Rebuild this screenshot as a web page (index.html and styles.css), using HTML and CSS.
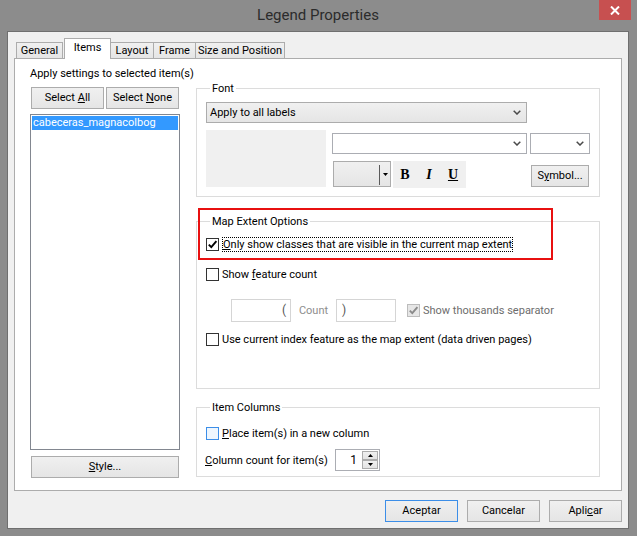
FILE: index.html
```html
<!DOCTYPE html>
<html>
<head>
<meta charset="utf-8">
<title>Legend Properties</title>
<link rel="stylesheet" href="styles.css">
</head>
<body>
<div class="window">
  <div class="titlebar">
    <div class="title">Legend Properties</div>
    <div class="close">
      <svg width="10" height="9" viewBox="0 0 10 9"><path d="M1 0.5 L9 8.5 M9 0.5 L1 8.5" stroke="#fff" stroke-width="2" fill="none"/></svg>
    </div>
  </div>
  <div class="client">
    <div class="tabs">
      <div class="tab t-general">General</div>
      <div class="tab t-items active">Items</div>
      <div class="tab t-layout">Layout</div>
      <div class="tab t-frame">Frame</div>
      <div class="tab t-size">Size and Position</div>
    </div>
    <div class="panel">
      <div class="left-col">
        <div class="caption">Apply settings to selected item(s)</div>
        <div class="select-row">
          <div class="btn btn-sel"><span>Select <u>A</u>ll</span></div>
          <div class="btn btn-sel"><span>Select <u>N</u>one</span></div>
        </div>
        <div class="listbox">
          <div class="list-item selected">cabeceras_magnacolbog</div>
        </div>
        <div class="btn btn-style"><span><u>S</u>tyle...</span></div>
      </div>
      <div class="right-col">
        <div class="group group-font">
          <div class="group-title">Font</div>
          <div class="combo combo-labels">
            <span>Apply to all labels</span>
            <svg class="chev" width="8" height="5" viewBox="0 0 8 5"><path d="M0.7 0.7 L4 4 L7.3 0.7" stroke="#4a4a4a" stroke-width="1.5" fill="none"/></svg>
          </div>
          <div class="font-row">
            <div class="preview"></div>
            <div class="font-controls">
              <div class="fc-row-a">
                <div class="combo white combo-font">
                  <span></span>
                  <svg class="chev" width="8" height="5" viewBox="0 0 8 5"><path d="M0.7 0.7 L4 4 L7.3 0.7" stroke="#4a4a4a" stroke-width="1.5" fill="none"/></svg>
                </div>
                <div class="combo white combo-size">
                  <span></span>
                  <svg class="chev" width="8" height="5" viewBox="0 0 8 5"><path d="M0.7 0.7 L4 4 L7.3 0.7" stroke="#4a4a4a" stroke-width="1.5" fill="none"/></svg>
                </div>
              </div>
              <div class="fc-row-b">
                <div class="colordd">
                  <div class="colordd-swatch"></div>
                  <div class="colordd-arrow">
                    <svg width="5" height="3" viewBox="0 0 5 3"><path d="M0 0 H5 L2.5 3 Z" fill="#000"/></svg>
                  </div>
                </div>
                <div class="biu">
                  <span class="b">B</span>
                  <span class="i">I</span>
                  <span class="u">U</span>
                </div>
                <div class="btn btn-symbol"><span>S<u>y</u>mbol...</span></div>
              </div>
            </div>
          </div>
        </div>

        <div class="group group-extent">
          <div class="highlight"></div>
          <div class="group-title">Map Extent Options</div>
          <div class="row row-only">
            <div class="cb">
              <svg width="11" height="11" viewBox="0 0 11 11"><path d="M1.8 5.6 L4.3 8.2 L9.4 2.2" stroke="#000" stroke-width="1.9" fill="none"/></svg>
            </div>
            <span class="cb-label focus"><u>O</u>nly show classes that are visible in the current map extent</span>
          </div>
          <div class="row row-count">
            <div class="cb"></div>
            <span class="cb-label">Show <u>f</u>eature count</span>
          </div>
          <div class="count-row">
            <div class="count-box left">(</div>
            <span class="count-label">Count</span>
            <div class="count-box right">)</div>
            <div class="cb disabled">
              <svg width="11" height="11" viewBox="0 0 11 11"><path d="M1.8 5.6 L4.3 8.2 L9.4 2.2" stroke="#8a8a8a" stroke-width="1.9" fill="none"/></svg>
            </div>
            <span class="cb-label gray">Show thousands separator</span>
          </div>
          <div class="row row-index">
            <div class="cb"></div>
            <span class="cb-label">Use current index feature as the map extent (data driven pages)</span>
          </div>
        </div>

        <div class="group group-columns">
          <div class="group-title">Item Columns</div>
          <div class="row row-place">
            <div class="cb hot"></div>
            <span class="cb-label"><u>P</u>lace item(s) in a new column</span>
          </div>
          <div class="spin-row">
            <span class="spin-label"><u>C</u>olumn count for item(s)</span>
            <div class="spin">
              <span class="spin-value">1</span>
              <div class="spin-buttons">
                <div class="spin-btn">
                  <svg width="5" height="3" viewBox="0 0 5 3"><path d="M0 3 H5 L2.5 0 Z" fill="#000"/></svg>
                </div>
                <div class="spin-btn">
                  <svg width="5" height="3" viewBox="0 0 5 3"><path d="M0 0 H5 L2.5 3 Z" fill="#000"/></svg>
                </div>
              </div>
            </div>
          </div>
        </div>
      </div>
    </div>
    <div class="footer">
      <div class="btn btn-footer default"><span>Aceptar</span></div>
      <div class="btn btn-footer"><span>Cancelar</span></div>
      <div class="btn btn-footer"><span>Apli<u>c</u>ar</span></div>
    </div>
  </div>
</div>
</body>
</html>
```

FILE: styles.css
```css
* { box-sizing: border-box; }

html, body {
  margin: 0;
  padding: 0;
}

body {
  width: 637px;
  height: 536px;
  overflow: hidden;
  background: #8c8c8c;
  font-family: Roboto, "Liberation Sans", sans-serif;
  font-size: 11px;
  color: #000;
  white-space: nowrap;
}

u { text-decoration: underline; text-underline-offset: 1px; }

.window {
  height: 536px;
  display: flex;
  flex-direction: column;
  padding: 0 8px 7px 7px;
}

/* title bar */
.titlebar {
  flex: none;
  height: 31px;
  position: relative;
  display: flex;
  align-items: center;
  justify-content: center;
}

.title {
  font-size: 15px;
  color: #2b2b2b;
  margin-top: -1px;
}

.close {
  position: absolute;
  top: 0;
  right: -2px;
  width: 32px;
  height: 20px;
  background: #c75050;
  display: flex;
  align-items: center;
  justify-content: center;
}

/* client area */
.client {
  flex: 1;
  display: flex;
  flex-direction: column;
  background: #f0f0f0;
  border: 1px solid #6f6f6f;
  padding: 6px 6px 6px 6px;
}

/* tabs */
.tabs {
  flex: none;
  height: 21px;
  margin-bottom: -1px;
  display: flex;
  align-items: flex-end;
  padding-left: 2px;
  position: relative;
  z-index: 1;
}

.tab {
  height: 17px;
  border: 1px solid #acacac;
  background: linear-gradient(#f0f0f0, #e5e5e5);
  display: flex;
  align-items: center;
  justify-content: center;
  margin-right: -1px;
  padding-bottom: 1px;
}

.tab.active {
  height: 21px;
  background: #fff;
  border-bottom: none;
  padding-bottom: 4px;
  position: relative;
  z-index: 2;
}

.t-general { width: 47px; margin-right: 1px; }
.t-items { width: 47px; }
.t-layout { width: 44px; }
.t-frame { width: 43px; }
.t-size { width: 90px; }

/* panel */
.panel {
  flex: 1;
  display: flex;
  background: #fff;
  border: 1px solid #acacac;
  padding: 0 21px 0 15px;
}

.left-col {
  flex: none;
  width: 150px;
  display: flex;
  flex-direction: column;
}

.caption {
  margin-top: 7px;
  height: 15px;
  line-height: 15px;
}

.select-row {
  margin-top: 6px;
  display: flex;
  gap: 2px;
  padding-left: 1px;
}

.btn {
  height: 22px;
  border: 1px solid #acacac;
  background: linear-gradient(#f0f0f0, #e5e5e5);
  display: flex;
  align-items: center;
  justify-content: center;
  padding-bottom: 1px;
}

.btn-sel { width: 73px; }

.listbox {
  margin-top: 5px;
  height: 336px;
  border: 1px solid #828790;
  padding: 1px;
}

.list-item {
  height: 14px;
  line-height: 14px;
  padding-left: 1px;
}

.list-item.selected {
  background: #3399ff;
  color: #fff;
}

.btn-style {
  margin-top: 6px;
  margin-left: 1px;
  width: 148px;
}

/* right column / groups */
.right-col {
  flex: none;
  width: 404px;
  margin-left: 16px;
  display: flex;
  flex-direction: column;
}

.group {
  position: relative;
  border: 1px solid #dcdcdc;
  padding: 0 8px 0 9px;
  display: flex;
  flex-direction: column;
  align-items: flex-start;
}

.group-title {
  margin: -8px 0 0 4px;
  padding: 0 2px;
  background: #fff;
  height: 15px;
  line-height: 15px;
  position: relative;
}

.group-font { margin-top: 29px; height: 109px; }
.group-extent { margin-top: 24px; height: 168px; }
.group-columns { margin-top: 18px; height: 70px; }

/* combos */
.combo {
  height: 21px;
  border: 1px solid #acacac;
  background: linear-gradient(#f0f0f0, #e5e5e5);
  display: flex;
  align-items: center;
  justify-content: space-between;
  padding: 0 5px 1px 3px;
}

.combo.white {
  background: #fff;
  border-color: #abadb3;
}

.chev { flex: none; margin-top: 1px; }

.combo-labels {
  margin-top: 6px;
  width: 321px;
}

.font-row {
  margin-top: 7px;
  display: flex;
}

.preview {
  width: 120px;
  height: 57px;
  background: #f0f0f0;
}

.font-controls {
  margin-left: 6px;
  width: 258px;
  display: flex;
  flex-direction: column;
}

.fc-row-a {
  margin-top: 3px;
  display: flex;
  gap: 3px;
}

.combo-font { width: 195px; }
.combo-size { width: 60px; }

.fc-row-b {
  margin-top: 7px;
  display: flex;
  align-items: flex-start;
}

.colordd {
  margin-left: 1px;
  width: 58px;
  height: 26px;
  border: 1px solid #acacac;
  background: linear-gradient(#f0f0f0, #e5e5e5);
  display: flex;
  align-items: center;
}

.colordd-swatch { flex: 1; }

.colordd-arrow {
  width: 11px;
  height: 20px;
  border-left: 1px solid #5a5a5a;
  display: flex;
  align-items: center;
  justify-content: center;
  margin-top: 1px;
}

.biu {
  margin-left: 2px;
  width: 73px;
  height: 27px;
  background: #f0f0f0;
  display: flex;
  align-items: center;
  font-family: "Liberation Serif", serif;
  font-weight: bold;
  font-size: 14px;
}

.biu span {
  width: 24px;
  text-align: center;
}

.biu .i { font-style: italic; }
.biu .u { text-decoration: underline; text-underline-offset: 1px; }

.btn-symbol {
  margin-left: auto;
  margin-right: 1px;
  margin-top: 4px;
  width: 58px;
}

/* map extent */
.highlight {
  position: absolute;
  left: 1px;
  top: -14px;
  width: 355px;
  height: 52px;
  border: 2px solid #e81010;
}

.row {
  display: flex;
  align-items: center;
  height: 15px;
}

.cb {
  flex: none;
  width: 13px;
  height: 13px;
  border: 1px solid #333;
  background: #fff;
  display: flex;
  align-items: center;
  justify-content: center;
}

.cb.disabled {
  border-color: #bcbcbc;
  background: #e6e6e6;
}

.cb.hot {
  border-color: #3c8ee8;
  background: #eef6fe;
}

.cb-label {
  margin-left: 3px;
  line-height: 15px;
}

.cb-label.focus {
  border: 1px dotted #000;
  line-height: 13px;
}

.cb-label.gray { color: #6d6d6d; }

.row-only { margin-top: 8px; }
.row-count { margin-top: 15px; }

.count-row {
  margin-top: 17px;
  margin-left: 25px;
  height: 23px;
  display: flex;
  align-items: center;
}

.count-box {
  width: 60px;
  height: 23px;
  border: 1px solid #d5d5d5;
  background: #fff;
  color: #555;
  line-height: 20px;
  font-size: 12px;
}

.count-box.left { text-align: right; padding-right: 4px; }
.count-box.right { text-align: left; padding-left: 5px; }

.count-label {
  color: #8d8d8d;
  width: 45px;
  text-align: center;
}

.count-row .cb { margin-left: 11px; }

.row-index { margin-top: 10px; }

/* item columns */
.row-place { margin-top: 11px; }

.spin-row {
  margin-top: 8px;
  height: 22px;
  display: flex;
  align-items: center;
}

.spin-label {
  margin-left: -1px;
  width: 130px;
}

.spin {
  width: 45px;
  height: 22px;
  border: 1px solid #abadb3;
  background: #fff;
  display: flex;
  align-items: center;
  padding: 1px;
}

.spin-value {
  flex: 1;
  text-align: right;
  padding-right: 5px;
  font-size: 12px;
}

.spin-buttons {
  width: 16px;
  height: 18px;
  display: flex;
  flex-direction: column;
}

.spin-btn {
  flex: 1;
  border: 1px solid #acacac;
  background: linear-gradient(#f0f0f0, #e3e3e3);
  display: flex;
  align-items: center;
  justify-content: center;
}

/* footer */
.footer {
  flex: none;
  height: 31px;
  padding-top: 9px;
  display: flex;
  justify-content: flex-end;
  gap: 9px;
}

.btn-footer { width: 73px; }

.btn-footer.default { border-color: #3c8ee8; }
```
